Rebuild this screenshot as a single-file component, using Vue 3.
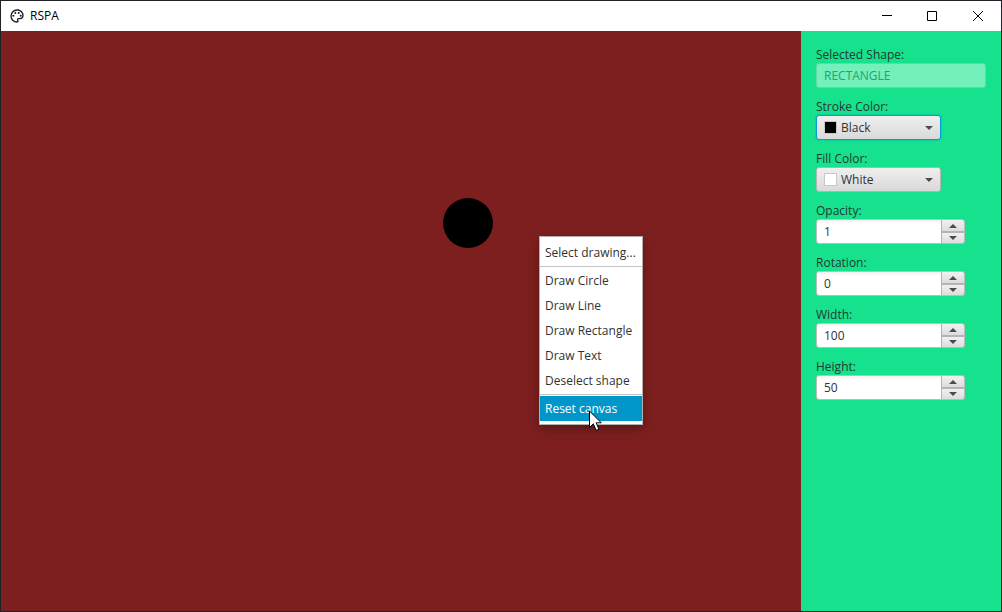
<script setup>
import { ref } from 'vue'

const selectedShape = ref('RECTANGLE')
const colors = [
  { name: 'Black', value: '#000000' },
  { name: 'White', value: '#ffffff' },
]
const pickers = ref([
  { id: 'stroke', label: 'Stroke Color:', color: 'Black', focused: true },
  { id: 'fill', label: 'Fill Color:', color: 'White', focused: false },
])
const spinners = ref([
  { id: 'opacity', label: 'Opacity:', value: '1' },
  { id: 'rotation', label: 'Rotation:', value: '0' },
  { id: 'width', label: 'Width:', value: '100' },
  { id: 'height', label: 'Height:', value: '50' },
])
const menuGroups = [
  ['Select drawing...'],
  ['Draw Circle', 'Draw Line', 'Draw Rectangle', 'Draw Text', 'Deselect shape'],
  ['Reset canvas'],
]
const activeItem = 'Reset canvas'

const swatch = (name) => colors.find((c) => c.name === name).value
const step = (spinner, amount) => {
  spinner.value = String(Number(spinner.value) + amount)
}
</script>

<template>
  <div class="window">
    <header class="titlebar">
      <svg class="app-icon" viewBox="0 0 24 24" aria-hidden="true">
        <path d="M12 22A10 10 0 0 1 2 12A10 10 0 0 1 12 2C17.500 2 22 6 22 11A6 6 0 0 1 16 17H14.200C13.900 17 13.700 17.200 13.700 17.500C13.700 17.600 13.800 17.700 13.800 17.800C14.200 18.300 14.400 18.900 14.400 19.500C14.500 20.900 13.400 22 12 22M12 4A8 8 0 0 0 4 12A8 8 0 0 0 12 20C12.300 20 12.500 19.800 12.500 19.500C12.500 19.300 12.400 19.200 12.400 19.100C12 18.600 11.800 18.100 11.800 17.500C11.800 16.100 12.900 15 14.300 15H16A4 4 0 0 0 20 11C20 7.100 16.400 4 12 4Z" />
        <circle cx="6.500" cy="11.500" r="1.500" />
        <circle cx="9.500" cy="7.500" r="1.500" />
        <circle cx="14.500" cy="7.500" r="1.500" />
        <circle cx="17.500" cy="11.500" r="1.500" />
      </svg>
      <h1 class="title">RSPA</h1>
      <div class="window-buttons">
        <button type="button" aria-label="Minimize">
          <svg viewBox="0 0 12 12"><path d="M2 5.500H12" /></svg>
        </button>
        <button type="button" aria-label="Maximize">
          <svg viewBox="0 0 12 12"><path d="M1.500 1.500H10.500V10.500H1.500Z" /></svg>
        </button>
        <button type="button" aria-label="Close">
          <svg viewBox="0 0 12 12"><path d="M1 1L11 11M11 1L1 11" /></svg>
        </button>
      </div>
    </header>

    <div class="body">
      <main class="canvas">
        <div class="shape"></div>

        <div class="menu" role="menu">
          <div v-for="(group, i) in menuGroups" :key="i" class="menu-group" role="group">
            <button
              v-for="item in group"
              :key="item"
              type="button"
              role="menuitem"
              class="menu-item"
              :class="{ active: item === activeItem }"
            >{{ item }}</button>
          </div>
        </div>

        <svg class="pointer" viewBox="0 0 13 21" aria-hidden="true">
          <path d="M0.500 1V17.500L4.300 13.800L7.200 20.300L9.900 19.200L7.200 12.800H12.300Z" />
        </svg>
      </main>

      <aside class="panel">
        <div class="field">
          <label for="shape">Selected Shape:</label>
          <input id="shape" v-model="selectedShape" class="text" type="text" disabled />
        </div>

        <div v-for="p in pickers" :key="p.id" class="field">
          <label :for="p.id">{{ p.label }}</label>
          <div class="picker" :class="{ focused: p.focused }">
            <select :id="p.id" v-model="p.color">
              <option v-for="c in colors" :key="c.name">{{ c.name }}</option>
            </select>
            <span class="swatch" :style="{ background: swatch(p.color) }"></span>
            <svg class="arrow" viewBox="0 0 8 4" aria-hidden="true"><path d="M0 0H8L4 4Z" /></svg>
          </div>
        </div>

        <div v-for="s in spinners" :key="s.id" class="field">
          <label :for="s.id">{{ s.label }}</label>
          <div class="spinner">
            <input :id="s.id" v-model="s.value" type="text" />
            <div class="steps">
              <button type="button" aria-label="Increase" @click="step(s, 1)">
                <svg viewBox="0 0 8 4"><path d="M0 4H8L4 0Z" /></svg>
              </button>
              <button type="button" aria-label="Decrease" @click="step(s, -1)">
                <svg viewBox="0 0 8 4"><path d="M0 0H8L4 4Z" /></svg>
              </button>
            </div>
          </div>
        </div>
      </aside>
    </div>
  </div>
</template>

<style>
body {
  margin: 0;
}
</style>

<style scoped>
.window,
.window * {
  box-sizing: border-box;
}

.window {
  display: flex;
  flex-direction: column;
  min-height: 100vh;
  border: 1px solid #202225;
  font: 12px/16px "Open Sans", "Noto Sans", sans-serif;
  color: #323232;
}

button,
input,
select {
  margin: 0;
  padding: 0;
  border: 0;
  font: inherit;
  color: inherit;
  outline: none;
}

.titlebar {
  display: flex;
  align-items: center;
  height: 30px;
  padding-left: 8px;
  background: #fff;
  color: #000;
}

.app-icon {
  width: 16px;
  height: 16px;
  fill: #1c1c1c;
}

.title {
  margin: 0 0 0 5px;
  font-size: 12px;
  font-weight: 400;
}

.window-buttons {
  display: flex;
  align-self: stretch;
  margin-left: auto;
}

.window-buttons button {
  display: grid;
  place-items: center;
  width: 46px;
  background: none;
}

.window-buttons svg {
  width: 12px;
  height: 12px;
  fill: none;
  stroke: #000;
}

.body {
  display: flex;
  flex: 1;
}

.canvas {
  position: relative;
  flex: 1;
  background: #7e1f1f;
}

.shape {
  position: absolute;
  left: 442px;
  top: 167px;
  width: 50px;
  height: 50px;
  border-radius: 50%;
  background: #000;
}

.menu {
  position: absolute;
  left: 538px;
  top: 205px;
  width: 104px;
  padding: 3px 0;
  border: 1px solid #b5b0b0;
  background: #fff;
  box-shadow: 0 4px 10px rgba(0, 0, 0, 0.3);
}

.menu-group + .menu-group {
  margin-top: 1px;
  padding-top: 1px;
  border-top: 1px solid #c4c4c4;
}

.menu-item {
  display: block;
  width: 100%;
  height: 25px;
  padding: 0 5px;
  background: none;
  text-align: left;
  white-space: nowrap;
}

.menu-item.active {
  background: #0096c9;
  color: #fff;
}

.pointer {
  position: absolute;
  left: 588px;
  top: 379px;
  width: 13px;
  height: 21px;
  fill: #fff;
  stroke: #000;
}

.panel {
  display: flex;
  flex-direction: column;
  gap: 11px;
  width: 200px;
  padding: 16px 15px;
  background: #16e28d;
}

.field {
  display: flex;
  flex-direction: column;
}

.field label {
  color: #23382f;
}

.text {
  height: 25px;
  padding: 0 7px;
  border: 1px solid #5fd9a6;
  border-radius: 3px;
  background: #74f0bb;
  color: #22a36f;
}

.picker {
  display: grid;
  align-items: center;
  width: 125px;
  height: 25px;
}

.picker > * {
  grid-area: 1 / 1;
}

.picker select {
  width: 100%;
  height: 25px;
  padding: 0 24px;
  border: 1px solid #b4b4b4;
  border-radius: 3px;
  background: linear-gradient(#efefef, #d9d9d9);
  appearance: none;
}

.picker.focused select {
  border-color: #039ed3;
  box-shadow: 0 0 2px #039ed3;
}

.swatch {
  width: 13px;
  height: 13px;
  margin-left: 8px;
  border: 1px solid #c8c8c8;
  pointer-events: none;
}

.arrow {
  justify-self: end;
  width: 8px;
  height: 4px;
  margin-right: 8px;
  fill: #4c4c4c;
  pointer-events: none;
}

.spinner {
  display: flex;
  width: 149px;
  height: 25px;
  overflow: hidden;
  border: 1px solid #b9bdbb;
  border-radius: 3px;
  background: #b4b4b4;
}

.spinner input {
  flex: 1;
  min-width: 0;
  padding: 0 7px;
  background: linear-gradient(#f2f2f2, #fff 4px);
}

.steps {
  display: grid;
  grid-template-rows: 11px 1fr;
  gap: 2px;
  width: 22px;
  margin-left: 1px;
}

.steps button {
  display: grid;
  place-items: center;
  background: linear-gradient(#f1f1f1, #dcdcdc);
}

.steps svg {
  width: 8px;
  height: 4px;
  fill: #4c4c4c;
}
</style>
